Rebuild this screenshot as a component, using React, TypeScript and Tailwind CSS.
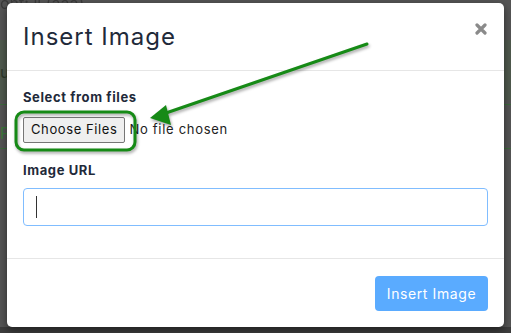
import React from "react";

export default function App() {
  return (
    <div className="relative w-[511px] h-[333px] overflow-hidden bg-[#555555]" style={{ fontFamily: "Inter, 'Noto Sans', sans-serif" }}>
      {/* faint background content behind the overlay */}
      <div className="absolute left-0 top-[-9px] text-[16px] text-[#2a2a2a] opacity-60">ont: ii (aaa)</div>
      <div className="absolute left-0 top-[40px] w-[511px] h-[60px] bg-[#505a4e]" />
      <div className="absolute left-0 top-[60px] text-[16px] text-[#2f3a2c]">ur</div>
      <div className="absolute left-0 top-[104px] w-[511px] h-[1px] bg-[#3e6b3e]" />
      <div className="absolute left-0 top-[121px] text-[16px] text-[#3d7a3d]">P</div>
      <div className="absolute left-0 top-[148px] w-[511px] h-[1px] bg-[#3e6b3e]" />
      <div className="absolute left-0 top-[327px] w-[511px] h-[6px] bg-[#3d3d3d]" />

      {/* modal */}
      <div className="relative ml-[7px] mt-[3px] w-[497px] h-[324px] bg-white rounded-[5px] shadow-[0_3px_8px_rgba(0,0,0,0.5)] flex flex-col">
        <div className="h-[68px] border-b border-[#e6e6e6] flex items-center justify-between pl-[16px] pr-[16px]">
          <div className="text-[24px] tracking-[1px] text-[#1f2a3a] leading-none">Insert Image</div>
          <svg width="12" height="12" viewBox="0 0 12 12" className="mt-[-16px] mr-[1px]">
            <path d="M2 2 L10 10 M10 2 L2 10" stroke="#8a8a8a" strokeWidth="3.2" strokeLinecap="round" />
          </svg>
        </div>
        <div className="flex-1 px-[16px] pt-[16px] border-b border-[#e6e6e6]">
          <div className="text-[13px] leading-[20px] font-bold tracking-[0.6px] text-[#1f2a3a]">Select from files</div>
          <div className="mt-[10px] flex items-center">
            <div className="h-[26px] px-[7px] flex items-center bg-[#efefef] border border-[#767676] rounded-[2px] text-[13px] tracking-[0.6px] text-[#111]">Choose Files</div>
            <div className="ml-[4px] text-[13px] tracking-[0.7px] text-[#222]">No file chosen</div>
          </div>
          <div className="mt-[17px] text-[13px] leading-[20px] font-bold tracking-[0.6px] text-[#1f2a3a]">Image URL</div>
          <div className="mt-[8px] h-[38px] border border-[#80bdff] rounded-[4px] flex items-center pl-[12px]">
            <span className="w-[1px] h-[22px] bg-[#333]" />
          </div>
        </div>
        <div className="h-[68px] flex items-center justify-end px-[16px]">
          <div className="w-[113px] h-[35px] rounded-[4px] bg-[#5aabff] text-white text-[14px] tracking-[0.6px] flex items-center justify-center">Insert Image</div>
        </div>
      </div>

      {/* annotation */}
      <svg className="absolute left-0 top-0 pointer-events-none" width="511" height="333" viewBox="0 0 511 333" style={{ filter: "drop-shadow(1px 2px 1.5px rgba(0,0,0,0.35))" }}>
        <rect x="16" y="112" width="119" height="38" rx="8" fill="none" stroke="#168a16" strokeWidth="3" />
        <line x1="367" y1="44" x2="166" y2="113" stroke="#168a16" strokeWidth="3" strokeLinecap="round" />
        <polygon points="150,118 166,105 171,125" fill="#168a16" />
      </svg>
    </div>
  );
}
